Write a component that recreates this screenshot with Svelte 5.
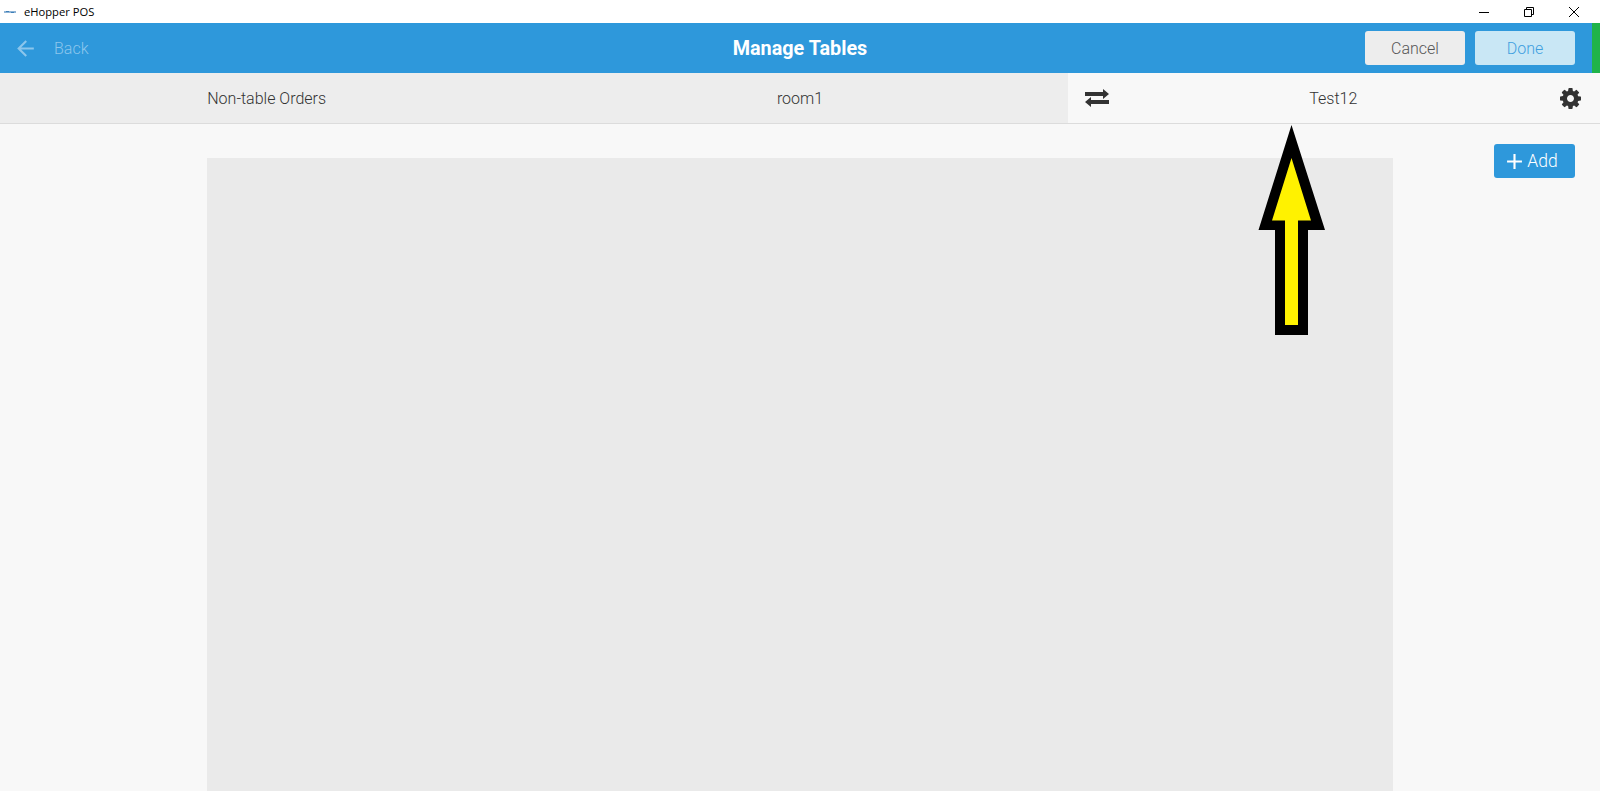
<script>
  const tabs = [
    { label: 'Non-table Orders' },
    { label: 'room1' },
    { label: 'Test12', active: true }
  ];
</script>

<div class="window">
  <div class="titlebar">
    <div class="appname">
      <svg class="logo" width="12" height="4" viewBox="0 0 12 4">
        <rect x="0" y="1" width="12" height="2" fill="#8fb4d6" />
        <rect x="2" y="1" width="3" height="1" fill="#3d7fb8" />
        <rect x="7" y="2" width="3" height="1" fill="#3d7fb8" />
      </svg>
      <span>eHopper POS</span>
    </div>
    <div class="winbtns">
      <svg width="12" height="12" viewBox="0 0 12 12"><path d="M1 6.500h10" stroke="#000" fill="none" /></svg>
      <svg width="12" height="12" viewBox="0 0 12 12"><path d="M1.500 3.500h7v7h-7zM3.500 3.500v-2h7v7h-2" stroke="#000" fill="none" /></svg>
      <svg width="12" height="12" viewBox="0 0 12 12"><path d="M1 1l10 10M11 1L1 11" stroke="#000" fill="none" /></svg>
    </div>
  </div>

  <header class="topbar">
    <div class="back">
      <svg width="25" height="25" viewBox="0 0 24 24"><path d="M20 11H7.830l5.590-5.590L12 4l-8 8 8 8 1.410-1.410L7.830 13H20z" fill="currentColor" /></svg>
      <span>Back</span>
    </div>
    <h1>Manage Tables</h1>
    <div class="actions">
      <button class="cancel">Cancel</button>
      <button class="done">Done</button>
    </div>
    <div class="status"></div>
  </header>

  <nav class="tabs">
    {#each tabs as tab}
      <div class="tab" class:active={tab.active}>
        {#if tab.active}
          <svg class="swap" width="24" height="18" viewBox="0 0 24 18">
            <path d="M0 3h18V0l6 5-6 5V7H0zM24 11H6V8l-6 5 6 5v-3h18z" fill="#333" />
          </svg>
        {/if}
        <span>{tab.label}</span>
        {#if tab.active}
          <svg class="cog" width="21" height="21" viewBox="0 0 1536 1536">
            <path fill="#333" d="M1024 768q0-106-75-181t-181-75-181 75-75 181 75 181 181 75 181-75 75-181zm512-109v222q0 12-8 23t-20 13l-185 28q-19 54-39 91 35 50 107 138 10 12 10 25t-9 23q-27 37-99 108t-94 71q-12 0-26-9l-138-108q-44 23-91 38-16 136-29 186-7 28-36 28h-222q-14 0-24.500-8.500t-11.500-21.500l-28-184q-49-16-90-37l-141 107q-10 9-25 9-14 0-25-11-126-114-165-168-7-10-7-23 0-12 8-23 15-21 51-66.500t54-70.500q-27-50-41-99l-183-27q-13-2-21-12.500t-8-23.500v-222q0-12 8-23t19-13l186-28q14-46 39-92-40-57-107-138-10-12-10-24 0-10 9-23 26-36 98.500-107.500t94.500-71.500q13 0 26 10l138 107q44-23 91-38 16-136 29-186 7-28 36-28h222q14 0 24.500 8.500t11.500 21.500l28 184q49 16 90 37l142-107q9-9 24-9 13 0 25 10 129 119 165 170 7 8 7 22 0 12-8 23-15 21-51 66.500t-54 70.500q26 50 41 98l183 28q13 2 21 12.500t8 23.500z" />
          </svg>
        {/if}
      </div>
    {/each}
  </nav>

  <main class="content">
    <div class="canvas"></div>
    <button class="add">
      <svg width="17" height="17" viewBox="0 0 16 16"><path d="M7 1h2v6h6v2H9v6H7V9H1V7h6z" fill="currentColor" /></svg>
      Add
    </button>
  </main>

  <!-- annotation drawn over the screenshot -->
  <svg class="pointer" width="70" height="212" viewBox="0 0 70 212">
    <path d="M34.500 1L1.500 106H18V211H51V106H68z" fill="#000" />
    <path d="M34.500 34L15 96.500H28V201H41V96.500H54z" fill="#fff200" />
  </svg>
</div>

<style>
  :global(body) {
    margin: 0;
    overflow: hidden;
  }

  .window {
    position: relative;
    display: flex;
    flex-direction: column;
    height: 791px;
    background: #f8f8f8;
    font-family: Roboto, sans-serif;
    color: #333;
  }

  .titlebar {
    height: 23px;
    flex: none;
    display: flex;
    justify-content: space-between;
    align-items: center;
    background: #fff;
  }

  .appname {
    display: flex;
    align-items: center;
    gap: 8px;
    padding-left: 4px;
    font-family: "Open Sans", sans-serif;
    font-size: 11.200px;
    color: #000;
  }

  .winbtns {
    display: flex;
    gap: 33px;
    padding-right: 20px;
  }

  .winbtns svg {
    display: block;
  }

  .topbar {
    height: 50px;
    flex: none;
    position: relative;
    display: flex;
    align-items: center;
    justify-content: space-between;
    background: #2e98db;
    padding: 0 25px 0 13px;
    color: #fff;
  }

  .back {
    display: flex;
    align-items: center;
    gap: 16px;
    color: #8cc6ec;
    font-size: 16px;
    font-weight: 300;
  }

  .topbar h1 {
    position: absolute;
    left: 0;
    right: 0;
    margin: 0;
    text-align: center;
    font-size: 19.800px;
    font-weight: 700;
    pointer-events: none;
  }

  .actions {
    display: flex;
    gap: 10px;
    position: relative;
  }

  button {
    font-family: Roboto, sans-serif;
    font-weight: 300;
    border: 0;
    border-radius: 3px;
    font-size: 16px;
  }

  .cancel,
  .done {
    width: 100px;
    height: 34px;
  }

  .cancel {
    background: #ededed;
    color: #555;
  }

  .done {
    background: #c9e7f5;
    color: #3f9fe0;
  }

  .status {
    position: absolute;
    right: 0;
    top: 0;
    bottom: 0;
    width: 8px;
    background: #20b34a;
  }

  .tabs {
    height: 50px;
    flex: none;
    display: grid;
    grid-template-columns: repeat(3, 1fr);
    background: #ededed;
    border-bottom: 1px solid #dcdcdc;
    font-size: 16px;
    font-weight: 300;
  }

  .tab {
    display: flex;
    align-items: center;
    justify-content: center;
    position: relative;
    padding-top: 1px;
  }

  .tab.active {
    background: #f8f8f8;
    margin-left: 1px;
  }

  .tab.active span {
    margin-left: -1px;
  }

  .swap {
    position: absolute;
    left: 17px;
    top: 16px;
  }

  .cog {
    position: absolute;
    right: 19px;
    top: 15px;
  }

  .content {
    flex: 1;
    min-height: 0;
    display: grid;
    grid-template-columns: 1186px 1fr;
    gap: 101px;
    padding: 34px 25px 0 207px;
  }

  .canvas {
    background: #eaeaea;
  }

  .add {
    justify-self: end;
    margin-top: -14px;
    width: 81px;
    height: 34px;
    display: flex;
    align-items: center;
    justify-content: center;
    gap: 4px;
    background: #2e98db;
    color: #fff;
    padding: 0 5px 0 0;
    font-size: 17.500px;
    font-weight: 300;
  }

  .pointer {
    position: absolute;
    left: 1257px;
    top: 124px;
  }
</style>
